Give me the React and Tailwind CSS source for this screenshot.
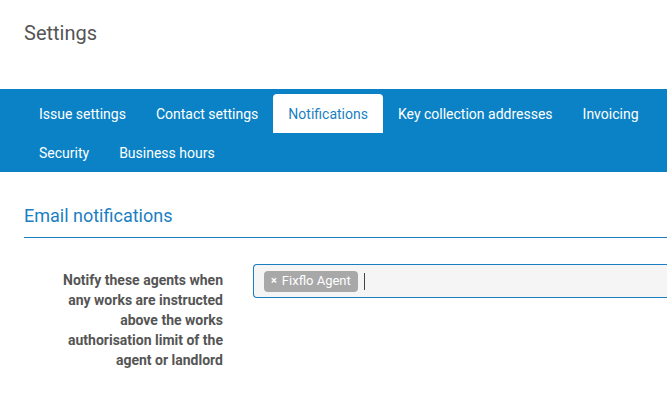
import React from "react";

const tabs = [
  "Issue settings",
  "Contact settings",
  "Notifications",
  "Key collection addresses",
  "Invoicing",
  "Security",
  "Business hours",
];

export default function App() {
  return (
    <div className="min-h-[402px] bg-white font-['Roboto',_sans-serif]">
      <div className="px-6 pt-[21px] h-[89px]">
        <h1 className="text-[20px] leading-[24px] text-[#555555]">Settings</h1>
      </div>

      <nav className="bg-[#0b82c5] pt-[5px] pl-6 flex flex-wrap">
        {tabs.map((t) => (
          <a
            key={t}
            href="#"
            className={`h-[39px] px-[15px] pt-[2px] flex items-center text-[14px] ${
              t === "Notifications"
                ? "bg-white text-[#1a7fc1] rounded-t-[4px]"
                : "text-white"
            }`}
          >
            {t}
          </a>
        ))}
      </nav>

      <div className="pl-6 pt-[33px]">
        <h2 className="text-[18px] leading-[22px] text-[#1a7fc1] pb-[10px] border-b border-[#1a7fc1]">
          Email notifications
        </h2>

        <div className="flex pt-[26px]">
          <label className="w-[199px] pl-[30px] text-right text-[14px] leading-[20px] font-bold text-[#555555] pt-[6px]">
            Notify these agents when any works are instructed above the works
            authorisation limit of the agent or landlord
          </label>
          <div className="ml-[30px] flex-1 h-[34px] border border-[#1a7fc1] border-r-0 rounded-l-[4px] bg-[#f5f5f5] flex items-center pl-[10px]">
            <span className="h-[21px] px-[7px] rounded-[4px] bg-[#a8a8a8] text-white text-[13px] flex items-center gap-[5px]">
              <span className="text-[11px] font-bold">×</span>
              Fixflo Agent
            </span>
            <span className="ml-[6px] w-px h-[17px] bg-[#444]" />
          </div>
        </div>
      </div>
    </div>
  );
}
